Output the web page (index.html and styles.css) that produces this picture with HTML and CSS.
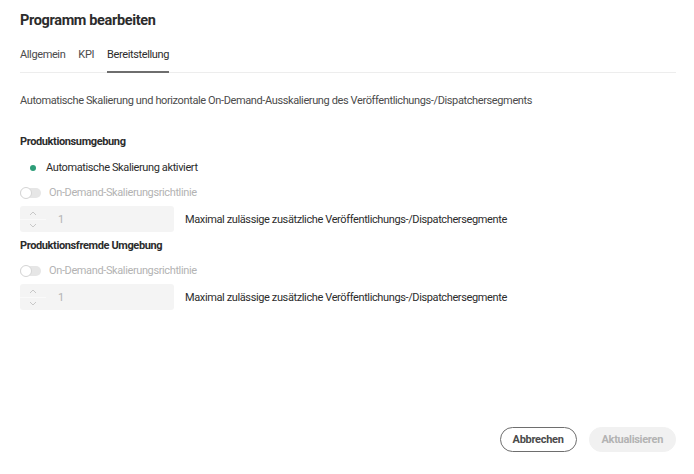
FILE: index.html
```html
<!DOCTYPE html>
<html lang="de">
<head>
<meta charset="utf-8">
<title>Programm bearbeiten</title>
<link rel="stylesheet" href="styles.css">
</head>
<body>
<div class="dialog">
  <h1 class="title">Programm bearbeiten</h1>
  <div class="tabs">
    <span class="tab">Allgemein</span>
    <span class="tab">KPI</span>
    <span class="tab active">Bereitstellung</span>
  </div>
  <p class="desc">Automatische Skalierung und horizontale On-Demand-Ausskalierung des Veröffentlichungs-/Dispatchersegments</p>

  <h2 class="heading first">Produktionsumgebung</h2>
  <div class="status"><span class="dot"></span>Automatische Skalierung aktiviert</div>
  <div class="switch-row"><span class="switch"><span class="knob"></span></span>On-Demand-Skalierungsrichtlinie</div>
  <div class="stepper-row">
    <div class="stepper">
      <div class="arrows">
        <svg class="chev" width="8" height="5" viewBox="0 0 8 5"><path d="M1 4 L4 1 L7 4" fill="none" stroke="#c8c8c8" stroke-width="1"/></svg>
        <span class="sep"></span>
        <svg class="chev" width="8" height="5" viewBox="0 0 8 5"><path d="M1 1 L4 4 L7 1" fill="none" stroke="#c8c8c8" stroke-width="1"/></svg>
      </div>
      <span class="value">1</span>
    </div>
    <span class="stepper-label">Maximal zulässige zusätzliche Veröffentlichungs-/Dispatchersegmente</span>
  </div>

  <h2 class="heading">Produktionsfremde Umgebung</h2>
  <div class="switch-row"><span class="switch"><span class="knob"></span></span>On-Demand-Skalierungsrichtlinie</div>
  <div class="stepper-row">
    <div class="stepper">
      <div class="arrows">
        <svg class="chev" width="8" height="5" viewBox="0 0 8 5"><path d="M1 4 L4 1 L7 4" fill="none" stroke="#c8c8c8" stroke-width="1"/></svg>
        <span class="sep"></span>
        <svg class="chev" width="8" height="5" viewBox="0 0 8 5"><path d="M1 1 L4 4 L7 1" fill="none" stroke="#c8c8c8" stroke-width="1"/></svg>
      </div>
      <span class="value">1</span>
    </div>
    <span class="stepper-label">Maximal zulässige zusätzliche Veröffentlichungs-/Dispatchersegmente</span>
  </div>

  <div class="footer">
    <button class="btn secondary">Abbrechen</button>
    <button class="btn primary" disabled>Aktualisieren</button>
  </div>
</div>
</body>
</html>
```
FILE: styles.css
```css
* { box-sizing: border-box; }
html, body { margin: 0; padding: 0; background: #fff; }
body {
  font-family: Roboto, "Liberation Sans", sans-serif;
  font-size: 11px;
  color: #4b4b4b;
  letter-spacing: -0.38px;
}
.dialog {
  width: 694px;
  height: 474px;
  padding: 12px 18px 0 20px;
  display: flex;
  flex-direction: column;
}
.title {
  margin: 0;
  font-size: 14.5px;
  line-height: 18px;
  font-weight: 700;
  color: #2c2c2c;
  letter-spacing: -0.35px;
}
.tabs {
  margin-top: 17px;
  display: flex;
  gap: 13px;
  border-bottom: 1px solid #ededed;
}
.tab {
  line-height: 16px;
  padding-bottom: 8px;
  color: #4b4b4b;
}
.tab.active {
  color: #2c2c2c;
  border-bottom: 2px solid #6e6e6e;
  margin-bottom: -1px;
}
.desc {
  margin: 20px 0 0;
  line-height: 16px;
}
.heading {
  margin: 6px 0 0;
  font-size: 11px;
  line-height: 16px;
  font-weight: 700;
  color: #2c2c2c;
}
.heading.first { margin-top: 25px; }
.status {
  margin-top: 10px;
  line-height: 16px;
  display: flex;
  align-items: center;
  padding-left: 10px;
  color: #2c2c2c;
}
.dot {
  width: 6px;
  height: 6px;
  border-radius: 50%;
  background: #2d9d78;
  margin-right: 10px;
}
.switch-row {
  margin-top: 9px;
  line-height: 16px;
  display: flex;
  align-items: center;
  color: #b3b3b3;
}
.switch {
  position: relative;
  width: 21px;
  height: 10px;
  border-radius: 5px;
  background: #e6e6e6;
  margin-right: 8px;
}
.knob {
  position: absolute;
  left: 0;
  top: -1px;
  width: 12px;
  height: 12px;
  border-radius: 50%;
  background: #fff;
  border: 1px solid #d5d5d5;
}
.stepper-row {
  margin-top: 5px;
  display: flex;
  align-items: center;
}
.stepper {
  width: 154px;
  height: 26px;
  background: #f4f4f4;
  border-radius: 3px;
  display: flex;
  align-items: center;
}
.arrows {
  width: 26px;
  height: 26px;
  display: flex;
  flex-direction: column;
  align-items: center;
  justify-content: center;
  gap: 3px;
}
.sep {
  width: 26px;
  height: 1px;
  background: #fafafa;
}
.value {
  margin-left: 12px;
  color: #b3b3b3;
}
.stepper-label {
  margin-left: 11px;
  color: #2c2c2c;
}
.footer {
  margin-top: auto;
  margin-bottom: 22px;
  display: flex;
  justify-content: flex-end;
  gap: 12px;
}
.btn {
  font-family: inherit;
  font-size: 11px;
  font-weight: 700;
  letter-spacing: -0.3px;
  height: 25px;
  border-radius: 13px;
  padding: 0 12px;
  cursor: pointer;
}
.secondary {
  background: #fff;
  border: 1px solid #6e6e6e;
  color: #4b4b4b;
}
.primary {
  background: #f1f1f1;
  border: 1px solid #f1f1f1;
  color: #b3b3b3;
}
```
